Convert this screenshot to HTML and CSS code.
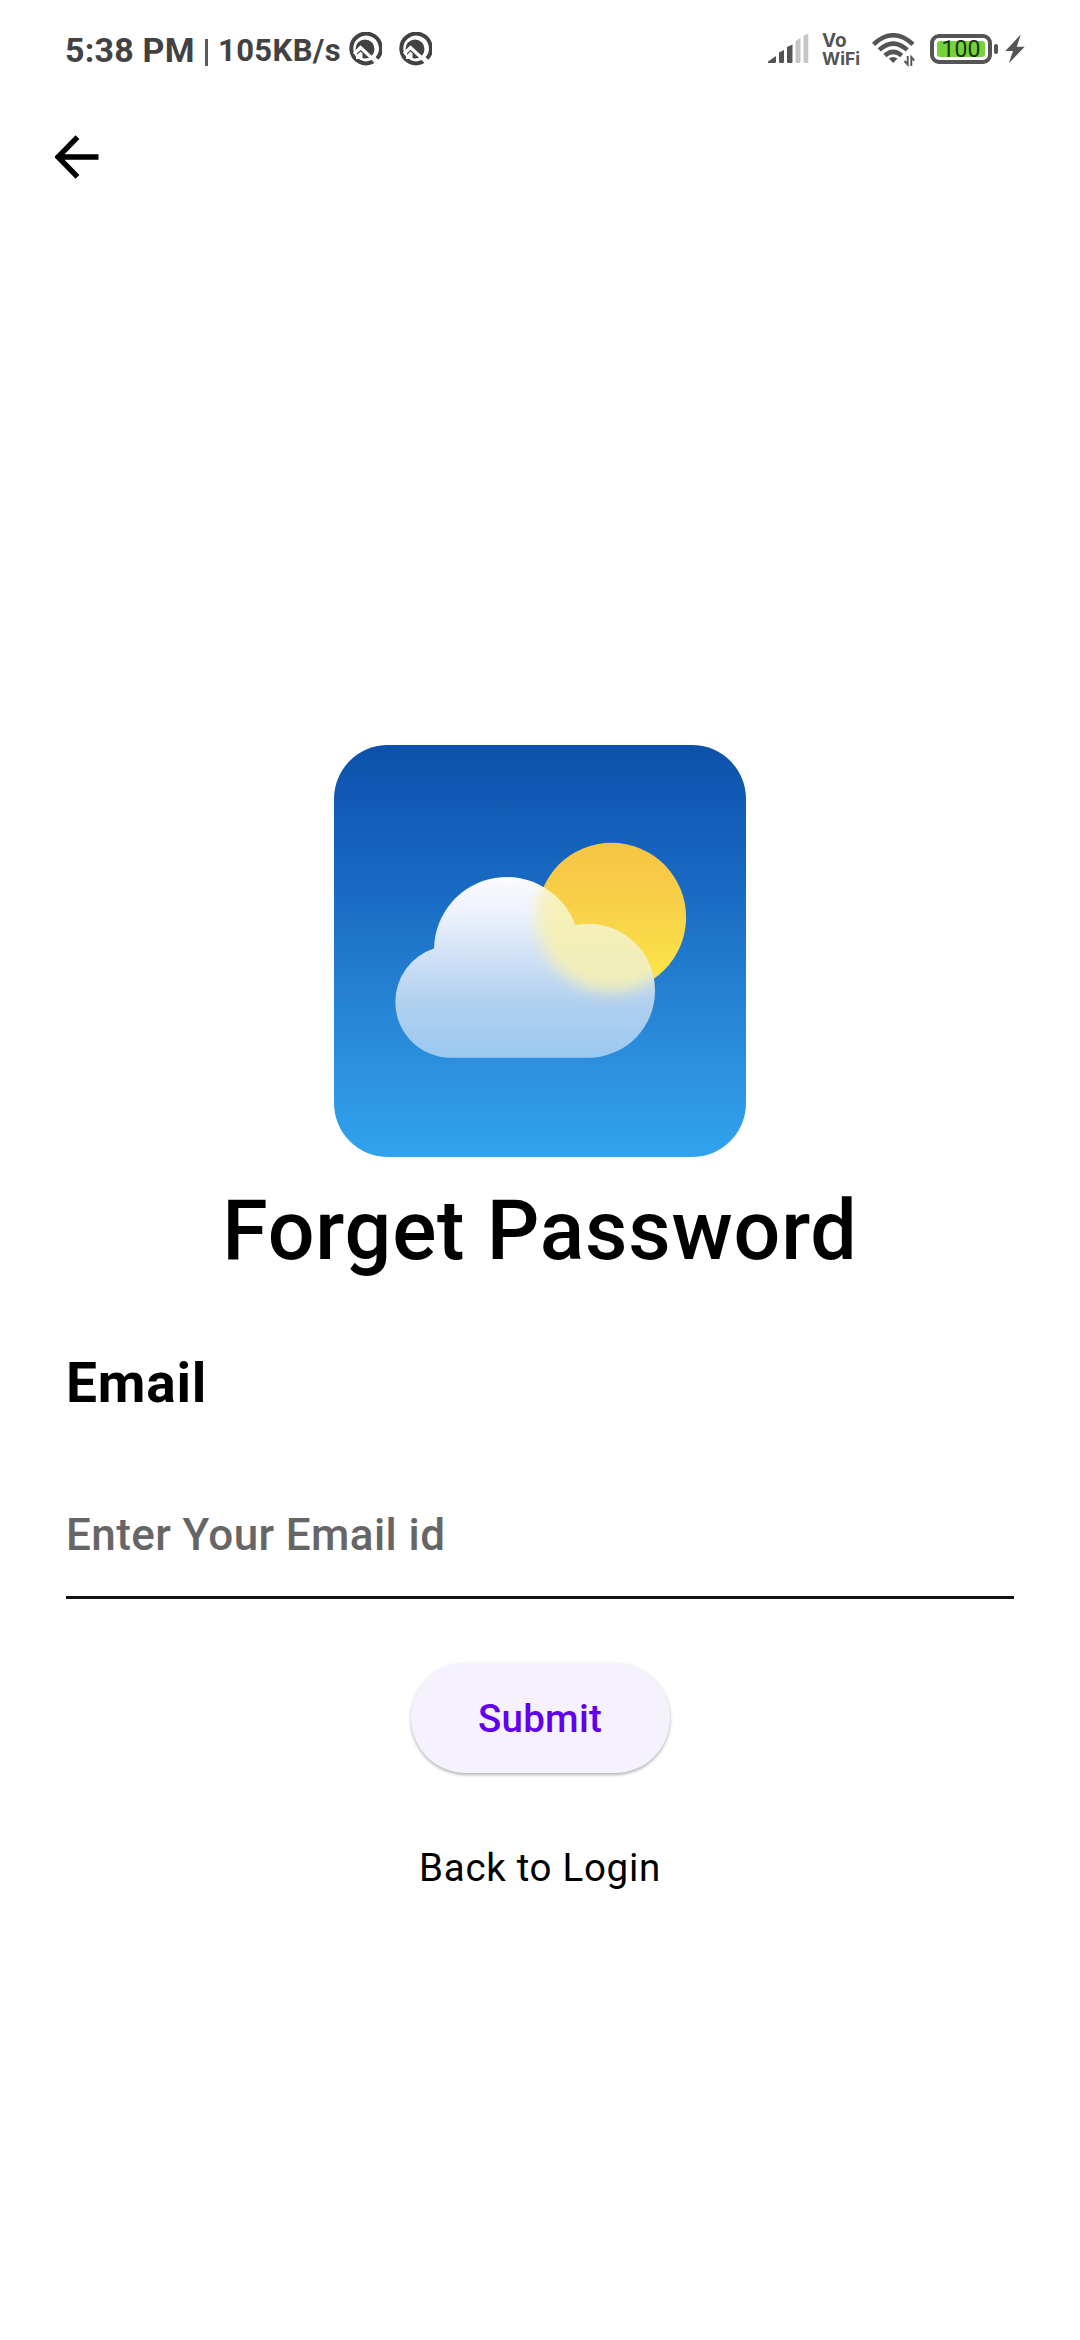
FILE: index.html
```html
<!DOCTYPE html>
<html lang="en">
<head>
<meta charset="utf-8">
<title>Forget Password</title>
<link rel="stylesheet" href="styles.css">
</head>
<body>
<header class="status">
  <span class="clock">5:38 PM</span>
  <span class="bar"></span>
  <span class="speed">105KB/s</span>
  <svg class="q" viewBox="0 0 34 34"><path d="M29 26.500A14.800 14.800 0 1 0 25.500 29.300" fill="none" stroke="#424242" stroke-width="4"/><circle cx="17" cy="17" r="9.500" fill="#424242"/><path d="M6 22L12.500 15.500L27.500 29.500" fill="none" stroke="#fff" stroke-width="3.200"/><path d="M8 24L12.500 19.500L14.500 21.500V27H8Z" fill="#fff"/></svg>
  <svg class="q q-second" viewBox="0 0 34 34"><path d="M29 26.500A14.800 14.800 0 1 0 25.500 29.300" fill="none" stroke="#424242" stroke-width="4"/><circle cx="17" cy="17" r="9.500" fill="#424242"/><path d="M6 22L12.500 15.500L27.500 29.500" fill="none" stroke="#fff" stroke-width="3.200"/><path d="M8 24L12.500 19.500L14.500 21.500V27H8Z" fill="#fff"/></svg>
  <svg class="signal" viewBox="0 0 41 30"><g fill="#545454"><path d="M0 29V27.5L8 22V28Q8 29 7 29Z"/><path d="M11 18.5L16 16V28Q16 29 15 29H12Q11 29 11 28Z"/><path d="M19 13L24.5 10.5V28Q24.5 29 23.5 29H20Q19 29 19 28Z"/></g><g fill="#c6c6c6"><path d="M27.5 7L32.5 4V28Q32.5 29 31.5 29H28.5Q27.5 29 27.5 28Z"/><path d="M35.5 2L38.5 0H40.3V28Q40.3 29 39.3 29H36.5Q35.5 29 35.5 28Z"/></g></svg>
  <span class="vowifi"><span class="vo">Vo</span><span>WiFi</span></span>
  <svg class="wifi" viewBox="0 0 43 34"><g fill="none" stroke="#545454" stroke-width="4.400"><path d="M1.5 11.3Q21.2-6.8 41 11.3"/><path d="M7.2 16.9Q21.2 4.3 35.3 16.9"/><path d="M12.8 22.5Q21.2 15.2 29.7 22.5"/></g><path d="M16.8 25.5Q21.2 22.3 25.5 25.5L21.2 30Z" fill="#545454"/><path d="M35.7 23V31.5L32.5 28M39.3 33V24L42.2 27.7" fill="none" stroke="#545454" stroke-width="1.9"/></svg>
  <span class="battery"><span class="charge">100</span></span>
  <span class="cap"></span>
  <svg class="bolt" viewBox="0 0 20 30"><path d="M15.8 0.5L0.3 17H8L3.8 29.3L19.7 12.7H11.8Z" fill="#545454"/></svg>
</header>
<nav class="toolbar">
  <svg class="back" viewBox="0 0 44 44"><path d="M43.5 22H5M22.5 2.2L3 22L22.5 41.8" fill="none" stroke="#000" stroke-width="5.4"/></svg>
</nav>
<main class="content">
  <svg class="logo" viewBox="0 0 412 412">
    <defs>
      <linearGradient id="sky" x1="0" y1="0" x2="0" y2="1"><stop offset="0" stop-color="#0c51ac"/><stop offset=".37" stop-color="#1a6bc4"/><stop offset=".5" stop-color="#2078cb"/><stop offset=".75" stop-color="#2b8edd"/><stop offset="1" stop-color="#32a3ed"/></linearGradient>
      <linearGradient id="sun" x1="0" y1="0" x2="0" y2="1"><stop offset="0" stop-color="#f6c445"/><stop offset=".45" stop-color="#f8d148"/><stop offset="1" stop-color="#fde849"/></linearGradient>
      <linearGradient id="cloud" gradientUnits="userSpaceOnUse" x1="0" y1="132" x2="0" y2="313"><stop offset="0" stop-color="#fbfbff"/><stop offset=".18" stop-color="#eff3fc"/><stop offset=".52" stop-color="#c6dbf4"/><stop offset=".7" stop-color="#b0d0ef"/><stop offset="1" stop-color="#9bc9f1"/></linearGradient>
      <linearGradient id="glow" x1="0" y1="0" x2="0" y2="1"><stop offset="0" stop-color="#fcf3b8"/><stop offset="1" stop-color="#efedb9"/></linearGradient>
      <clipPath id="cloudShape"><path d="M117 312.700A55.500 55.500 0 0 1 61.300 257A56 56 0 0 1 100 203.500A72.800 72.800 0 0 1 241.300 180.300A66.500 66.500 0 0 1 321 246A66.700 66.700 0 0 1 254.300 312.700Z"/></clipPath>
      <filter id="soft" x="-30%" y="-30%" width="160%" height="160%"><feGaussianBlur stdDeviation="7.5"/></filter>
    </defs>
    <rect width="412" height="412" rx="54" fill="url(#sky)"/>
    <circle cx="277.600" cy="172.300" r="74.500" fill="url(#sun)"/>
    <g clip-path="url(#cloudShape)"><rect x="50" y="120" width="290" height="200" fill="url(#cloud)"/><circle cx="277.600" cy="172.300" r="74.500" fill="url(#glow)" filter="url(#soft)"/></g>
  </svg>
  <h1 class="title">Forget Password</h1>
  <label class="label" for="email">Email</label>
  <input class="field" id="email" type="email" placeholder="Enter Your Email id">
  <button class="submit" type="button">Submit</button>
  <a class="login">Back to Login</a>
</main>
</body>
</html>
```
FILE: styles.css
```css
* { box-sizing: border-box; }
body { margin: 0; min-height: 2340px; background: #fff; color: #000; font-family: Roboto, sans-serif; display: flex; flex-direction: column; }
svg { display: block; flex: none; }
.status { height: 100px; padding: 0 55px 0 65px; display: flex; align-items: flex-start; color: #424242; white-space: nowrap; }
.clock { width: 140px; margin-top: 30px; font-size: 34px; line-height: 40px; font-weight: 700; letter-spacing: .2px; }
.bar { width: 3px; height: 27px; margin-top: 39px; background: #5a5a5a; }
.speed { width: 140px; padding-left: 10px; margin-top: 31px; font-size: 31px; line-height: 40px; font-weight: 700; letter-spacing: .4px; }
.q { width: 34px; height: 34px; margin-top: 32px; }
.q-second { margin-left: 16px; }
.signal { width: 41px; height: 30px; margin: 34px 0 0 auto; }
.vowifi { display: flex; flex-direction: column; width: 38px; margin: 32px 0 0 13px; font: 700 17.5px/18px Inter, sans-serif; color: #545454; }
.vo { font-size: 19px; }
.wifi { width: 43px; height: 34px; margin: 33px 0 0 12px; }
.battery { width: 62px; height: 30px; margin: 34px 0 0 15px; border: 4px solid #545454; border-radius: 9px; padding: 3px; }
.charge { display: block; height: 16px; border-radius: 3px; background: #76d13b; color: #18350b; font-size: 23px; line-height: 18px; text-align: center; }
.cap { width: 4px; height: 10px; margin: 44px 7px 0 2px; border-radius: 2px; background: #545454; }
.bolt { width: 20px; height: 30px; margin-top: 34px; }
.toolbar { height: 120px; padding: 35px 0 0 55px; }
.back { width: 44px; height: 44px; }
.content { display: flex; flex-direction: column; align-items: center; padding: 525px 66px 0; }
.logo { width: 412px; height: 412px; }
.title { margin: 25px 0 0; font-size: 82.5px; line-height: 98px; font-weight: 500; letter-spacing: .8px; white-space: nowrap; }
.label { align-self: flex-start; margin-top: 70px; font-size: 55px; line-height: 66px; font-weight: 700; letter-spacing: .8px; }
.field { width: 100%; height: 94px; margin-top: 89px; padding: 0 0 31px; border: 0; border-bottom: 3px solid #111; border-radius: 0; background: transparent; outline: 0; font: 500 44px/60px Roboto, sans-serif; letter-spacing: .4px; }
.field::placeholder { color: #666; opacity: 1; }
.submit { width: 259px; height: 110px; margin-top: 64px; padding: 1px 0 0; border: 0; border-radius: 55px; background: #f5f2fe; color: #6200ee; font: 500 38.5px/46px Roboto, sans-serif; letter-spacing: .25px; box-shadow: 0 2px 3px rgba(0,0,0,.24), 0 1px 5px rgba(0,0,0,.08); }
.login { margin-top: 72px; font-size: 38.5px; line-height: 46px; letter-spacing: .7px; }
```
